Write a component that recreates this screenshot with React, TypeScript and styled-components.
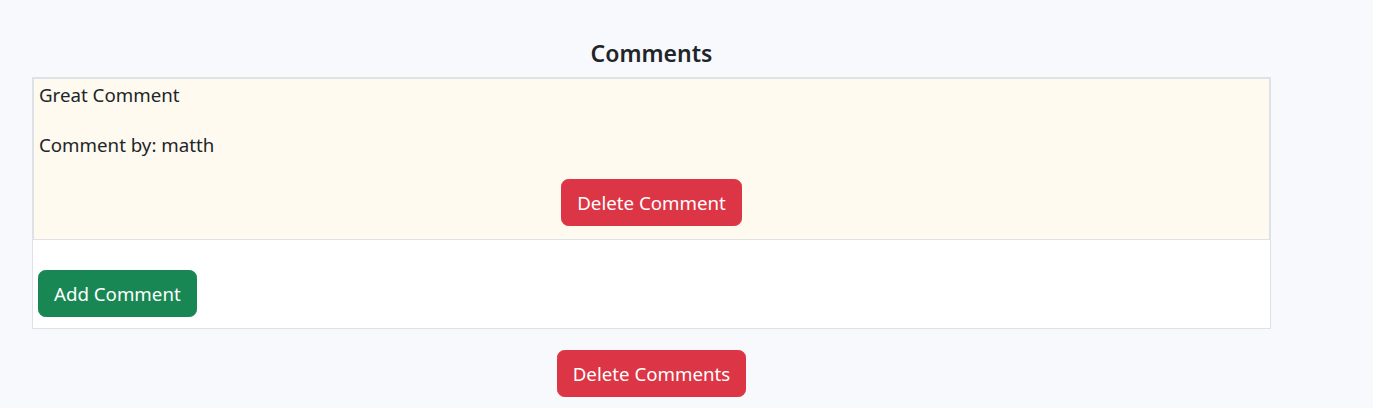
import React from "react";
import styled, { createGlobalStyle } from "styled-components";

const GlobalStyle = createGlobalStyle`
  html, body {
    margin: 0;
    padding: 0;
    background: #f8f9fd;
    color: #212529;
    font-family: "Noto Sans", "Open Sans", sans-serif;
    font-size: 18.7px;
  }
`;

const Page = styled.div`
  width: 1239px;
  padding: 38px 0 0 32px;
  display: flex;
  flex-direction: column;
  align-items: stretch;
`;

const Title = styled.h5`
  margin: 0 0 9px;
  font-size: 23px;
  line-height: 30px;
  font-weight: 600;
  text-align: center;
`;

const Panel = styled.div`
  border: 1px solid #dee2e6;
  background: #ffffff;
  display: flex;
  flex-direction: column;
`;

const CommentCard = styled.div`
  background: #fefaef;
  border: 1px solid #dee2e6;
  padding: 0 5px 13px;
  display: flex;
  flex-direction: column;
  align-items: flex-start;
`;

const Text = styled.p`
  margin: 0 0 20px;
  font-size: 18.7px;
  line-height: 30px;
  padding-top: 1px;
  height: 30px;
  box-sizing: border-box;
`;

const Footer = styled.div`
  padding: 30px 5px 11px;
  display: flex;
`;

const Button = styled.button<{ $variant: "danger" | "success"; $center?: boolean }>`
  font-family: inherit;
  font-size: 18.7px;
  line-height: 30px;
  padding: 7.5px 15px;
  border: 1px solid ${(p) => (p.$variant === "danger" ? "#dc3545" : "#198754")};
  background: ${(p) => (p.$variant === "danger" ? "#dc3545" : "#198754")};
  color: #ffffff;
  border-radius: 7.5px;
  cursor: pointer;
  align-self: ${(p) => (p.$center ? "center" : "flex-start")};
`;

const BottomRow = styled.div`
  display: flex;
  justify-content: center;
  margin-top: 21px;
`;

export default function App() {
  return (
    <>
      <GlobalStyle />
      <Page>
        <Title>Comments</Title>
        <Panel>
          <CommentCard>
            <Text>Great Comment</Text>
            <Text>Comment by: matth</Text>
            <Button $variant="danger" $center>
              Delete Comment
            </Button>
          </CommentCard>
          <Footer>
            <Button $variant="success">Add Comment</Button>
          </Footer>
        </Panel>
        <BottomRow>
          <Button $variant="danger">Delete Comments</Button>
        </BottomRow>
      </Page>
    </>
  );
}
